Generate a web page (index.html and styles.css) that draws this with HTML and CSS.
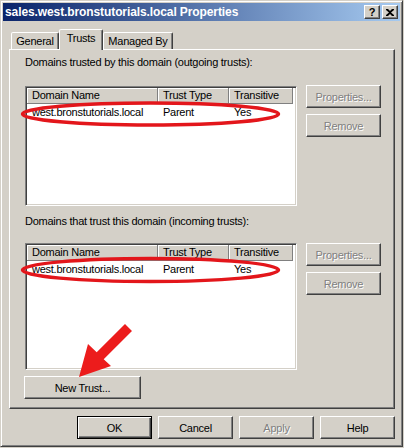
FILE: index.html
```html
<!DOCTYPE html>
<html>
<head>
<meta charset="utf-8">
<link rel="stylesheet" href="styles.css">
</head>
<body>
<div class="window">
  <div class="titlebar">
    <span class="title">sales.west.bronstutorials.local Properties</span>
    <div class="caption-btns">
      <span class="cbtn help">?</span>
      <span class="cbtn close"><svg width="8" height="7" viewBox="0 0 8 7"><path d="M0 0h2l2 2 2-2h2v1L5 3.5 8 6v1H6L4 5 2 7H0V6l3-2.5L0 1z" fill="#000"/></svg></span>
    </div>
  </div>
  <div class="content">
    <div class="tabs">
      <div class="tab t-general">General</div>
      <div class="tab t-trusts active">Trusts</div>
      <div class="tab t-managed">Managed By</div>
    </div>
    <div class="panel">
      <div class="label">Domains trusted by this domain (outgoing trusts):</div>
      <div class="group">
        <div class="list list1">
          <div class="lhead">
            <div class="hc c1">Domain Name</div>
            <div class="hc c2">Trust Type</div>
            <div class="hc c3">Transitive</div>
          </div>
          <div class="row">
            <div class="rc c1">west.bronstutorials.local</div>
            <div class="rc c2">Parent</div>
            <div class="rc c3">Yes</div>
          </div>
        </div>
        <div class="side">
          <button class="btn disabled">Properties...</button>
          <button class="btn disabled">Remove</button>
        </div>
      </div>
      <div class="label label2">Domains that trust this domain (incoming trusts):</div>
      <div class="group group2">
        <div class="list list2">
          <div class="lhead">
            <div class="hc c1">Domain Name</div>
            <div class="hc c2">Trust Type</div>
            <div class="hc c3">Transitive</div>
          </div>
          <div class="row">
            <div class="rc c1">west.bronstutorials.local</div>
            <div class="rc c2">Parent</div>
            <div class="rc c3">Yes</div>
          </div>
        </div>
        <div class="side side2">
          <button class="btn disabled">Properties...</button>
          <button class="btn disabled">Remove</button>
        </div>
      </div>
      <button class="btn newtrust">New Trust...</button>
    </div>
    <div class="footer">
      <button class="btn default">OK</button>
      <button class="btn">Cancel</button>
      <button class="btn disabled">Apply</button>
      <button class="btn">Help</button>
    </div>
  </div>
  <svg class="annot" width="403" height="447" viewBox="0 0 403 447">
    <ellipse cx="150.5" cy="114" rx="128" ry="11" fill="none" stroke="#e3161b" stroke-width="3.5"/>
    <ellipse cx="150.5" cy="270" rx="128" ry="11.5" fill="none" stroke="#e3161b" stroke-width="3.5"/>
    <polygon points="79,377 88,344 96.7,352.3 125,324 132,331 103.7,359.3 111,366" fill="#ec1c1c"/>
  </svg>
</div>
</body>
</html>
```

FILE: styles.css
```css
* { box-sizing: border-box; }
html, body { margin: 0; padding: 0; background: #d4d0c8; }
body {
  font-family: "Liberation Sans", Arial, sans-serif;
  font-size: 11px;
  letter-spacing: -0.25px;
  color: #000;
}
.window {
  position: relative;
  width: 403px;
  height: 447px;
  background: #d4d0c8;
  border: 1px solid;
  border-color: #d4d0c8 #404040 #404040 #d4d0c8;
  box-shadow: inset 1px 1px #fff, inset -1px -1px #808080;
  padding: 2px;
  display: flex;
  flex-direction: column;
}
.titlebar {
  height: 18px;
  flex: none;
  background: linear-gradient(to right, #0a246a, #a6caf0);
  display: flex;
  align-items: center;
  justify-content: space-between;
  padding: 0 2px 0 2px;
}
.title {
  color: #fff;
  font-weight: bold;
  font-size: 12px;
  letter-spacing: -0.1px;
  line-height: 18px;
}
.caption-btns { display: flex; gap: 2px; }
.cbtn {
  width: 16px;
  height: 14px;
  background: #d4d0c8;
  border: 1px solid;
  border-color: #fff #404040 #404040 #fff;
  box-shadow: inset -1px -1px #808080;
  display: flex;
  align-items: center;
  justify-content: center;
  font-weight: bold;
  font-size: 11px;
  line-height: 12px;
  letter-spacing: 0;
}
.content {
  flex: 1;
  display: flex;
  flex-direction: column;
  padding: 0 5px 0 6px;
}
.tabs {
  height: 28px;
  display: flex;
  align-items: flex-end;
  padding-left: 2px;
  position: relative;
  z-index: 1;
}
.tab {
  height: 17px;
  background: #d4d0c8;
  border: 1px solid;
  border-bottom: none;
  border-color: #fff #404040 transparent #fff;
  box-shadow: inset -1px 0 #808080;
  border-radius: 2px 2px 0 0;
  text-align: center;
  line-height: 14px;
  padding-top: 1px;
}
.t-general { width: 48px; }
.t-trusts { width: 44px; }
.t-managed { width: 70px; }
.tab.active {
  height: 21px;
  margin-bottom: -1px;
  padding-top: 1px;
}
.panel {
  width: 386px;
  height: 360px;
  flex: none;
  border: 1px solid;
  border-color: #fff #404040 #404040 #fff;
  box-shadow: inset -1px -1px #808080;
  padding: 6px 0 0 15px;
}
.label { height: 13px; line-height: 13px; }
.group { display: flex; margin-top: 17px; }
.label2 { margin-top: 9px; }
.group2 { margin-top: 15px; }
.list {
  width: 272px;
  background: #fff;
  border: 1px solid;
  border-color: #808080 #fff #fff #808080;
  box-shadow: inset 1px 1px #404040, inset -1px -1px #d4d0c8;
  padding: 1px;
}
.list1 { height: 120px; }
.list2 { height: 127px; }
.lhead { display: flex; height: 16px; }
.hc {
  height: 16px;
  background: #d4d0c8;
  border-right: 1px solid #808080;
  border-bottom: 1px solid #808080;
  box-shadow: inset 1px 1px #fff;
  padding-left: 5px;
  line-height: 15px;
  white-space: nowrap;
}
.c1 { width: 131px; }
.c2 { width: 71px; }
.c3 { width: 64px; }
.row { display: flex; height: 15px; line-height: 15px; margin-top: 1px; }
.rc { padding-left: 5px; white-space: nowrap; }
.side {
  display: flex;
  flex-direction: column;
  gap: 6px;
  margin-left: 9px;
  margin-top: -1px;
}
.side2 { margin-top: 0; }
.btn {
  width: 75px;
  height: 23px;
  padding: 0;
  margin: 0;
  font-family: inherit;
  font-size: 11px;
  letter-spacing: -0.25px;
  color: #000;
  background: #d4d0c8;
  border: 1px solid;
  border-color: #fff #404040 #404040 #fff;
  box-shadow: inset -1px -1px #808080, inset 1px 1px #d4d0c8;
  border-radius: 0;
  text-align: center;
}
.btn.disabled { color: #808080; text-shadow: 1px 1px 0 #fff; }
.btn.default {
  border: 1px solid #000;
  box-shadow: inset 1px 1px #fff, inset -1px -1px #404040, inset -2px -2px #808080;
}
.newtrust { width: 117px; margin: 6px 0 0 -1px; display: block; }
.footer {
  display: flex;
  justify-content: flex-end;
  gap: 6px;
  margin-top: 7px;
}
.annot {
  position: absolute;
  left: -1px;
  top: -1px;
  pointer-events: none;
}
```
